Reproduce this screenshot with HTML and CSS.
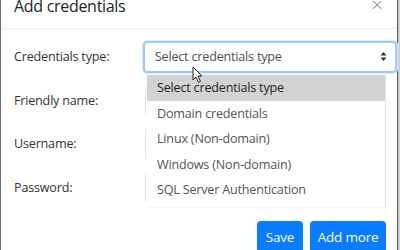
FILE: index.html
```html
<!DOCTYPE html>
<html>
<head>
<meta charset="utf-8">
<link rel="stylesheet" href="styles.css">
</head>
<body>
<div class="modal">
  <div class="header">
    <h1 class="title">Add credentials</h1>
    <span class="close">×</span>
  </div>
  <div class="body">
    <div class="row">
      <label class="label">Credentials type:</label>
      <div class="select">
        <span>Select credentials type</span>
        <svg class="arrows" width="7" height="11" viewBox="0 0 7 11"><path d="M3.5 1 L6.5 4.5 H0.5 Z M3.5 10 L0.5 6.5 H6.5 Z" fill="#333"/></svg>
      </div>
    </div>
    <div class="row"><label class="label">Friendly name:</label><div class="input"></div></div>
    <div class="row"><label class="label">Username:</label><div class="input"></div></div>
    <div class="row"><label class="label">Password:</label><div class="input"></div></div>
    <div class="footer">
      <button class="btn">Save</button>
      <button class="btn">Add more</button>
    </div>
    <ul class="dropdown">
      <li class="opt active">Select credentials type</li>
      <li class="opt">Domain credentials</li>
      <li class="opt">Linux (Non-domain)</li>
      <li class="opt">Windows (Non-domain)</li>
      <li class="opt">SQL Server Authentication</li>
    </ul>
    <svg class="cursor" width="12" height="18" viewBox="0 0 12 18"><path d="M1 1 V14 L4 11 L6.5 16.5 L8.5 15.5 L6 10 H10 Z" fill="#fff" stroke="#222" stroke-width="1"/></svg>
  </div>
</div>
</body>
</html>
```
FILE: styles.css
```css
html, body { margin: 0; padding: 0; }
body {
  width: 400px; height: 250px; overflow: hidden;
  background: #d0d0d0;
  font-family: "Open Sans", "Noto Sans", sans-serif;
  color: #212529;
}
.modal {
  width: 396px; height: 270px;
  margin-top: -7px;
  background: #fff;
  border-left: 1px solid #666;
  border-right: 1px solid #555;
  position: relative;
}
.header {
  height: 35px;
  border-bottom: 1px solid #eceef0;
  display: flex; align-items: flex-start; justify-content: space-between;
  padding: 0 14px 0 13px;
}
.title {
  margin: 0; font-size: 16px; font-weight: 500; line-height: 27px;
  letter-spacing: -0.3px;
}
.close {
  font-size: 21px; color: #8a8a8a; line-height: 22px; margin-top: 0px; font-weight: 300;
}
.body { padding: 6px 0 0 13px; position: relative; }
.row {
  display: flex; align-items: center; height: 43.5px;
}
.label {
  width: 131px; font-size: 12.6px; letter-spacing: -0.2px; color: #333;
}
.select {
  width: 236px; height: 28px;
  border: 2px solid #9fcbf3;
  border-radius: 4px;
  box-shadow: 0 0 0 1px #d8ebfc;
  display: flex; align-items: center; justify-content: space-between;
  padding: 0 8px 0 10px;
  font-size: 12.6px; color: #495057; letter-spacing: -0.2px;
}
.arrows { display: block; }
.input {
  width: 238px; height: 30px;
  border: 1px solid #e2e4e6; border-radius: 4px;
}
.footer {
  display: flex; justify-content: flex-end; gap: 7px;
  padding: 12px 11px 0 0;
}
.btn {
  background: #0a7cff; color: #fff; border: 0; border-radius: 4px;
  font-family: inherit; font-size: 13.5px; height: 34px;
  padding: 0 0 3px; letter-spacing: -0.2px;
}
.btn:first-child { width: 46px; }
.btn:last-child { width: 76px; }
.dropdown {
  position: absolute; left: 146px; top: 46px;
  width: 238px; margin: 0; padding: 0 0 4px; list-style: none;
  background: #fff;
  border-right: 1px solid #e6e6e6;
  border-bottom: 1px solid #f4f4f4;
}
.opt {
  height: 25.5px; line-height: 25.5px; padding-left: 10px;
  font-size: 12.6px; color: #555; letter-spacing: -0.2px;
}
.opt.active { background: #d3d3d3; color: #222; }
.cursor { position: absolute; left: 191px; top: 37px; }
```
